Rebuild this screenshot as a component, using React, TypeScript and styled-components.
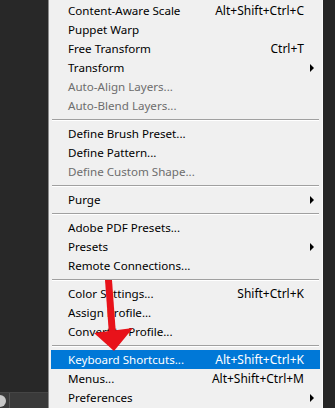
import styled, { createGlobalStyle } from 'styled-components'

const GlobalStyle = createGlobalStyle`
	html, body {
		margin: 0;
		padding: 0;
		background: #282828;
		overflow: hidden;
	}
	body {
		font-family: "Noto Sans", "Open Sans", sans-serif;
	}
`

type Item =
	| { kind: 'item', label: string, shortcut?: string, disabled?: boolean, sub?: boolean, active?: boolean }
	| { kind: 'sep' }

const items: Item[] = [
	{ kind: 'item', label: 'Content-Aware Scale', shortcut: 'Alt+Shift+Ctrl+C' },
	{ kind: 'item', label: 'Puppet Warp' },
	{ kind: 'item', label: 'Free Transform', shortcut: 'Ctrl+T' },
	{ kind: 'item', label: 'Transform', sub: true },
	{ kind: 'item', label: 'Auto-Align Layers...', disabled: true },
	{ kind: 'item', label: 'Auto-Blend Layers...', disabled: true },
	{ kind: 'sep' },
	{ kind: 'item', label: 'Define Brush Preset...' },
	{ kind: 'item', label: 'Define Pattern...' },
	{ kind: 'item', label: 'Define Custom Shape...', disabled: true },
	{ kind: 'sep' },
	{ kind: 'item', label: 'Purge', sub: true },
	{ kind: 'sep' },
	{ kind: 'item', label: 'Adobe PDF Presets...' },
	{ kind: 'item', label: 'Presets', sub: true },
	{ kind: 'item', label: 'Remote Connections...' },
	{ kind: 'sep' },
	{ kind: 'item', label: 'Color Settings...', shortcut: 'Shift+Ctrl+K' },
	{ kind: 'item', label: 'Assign Profile...' },
	{ kind: 'item', label: 'Convert to Profile...' },
	{ kind: 'sep' },
	{ kind: 'item', label: 'Keyboard Shortcuts...', shortcut: 'Alt+Shift+Ctrl+K', active: true },
	{ kind: 'item', label: 'Menus...', shortcut: 'Alt+Shift+Ctrl+M' },
	{ kind: 'item', label: 'Preferences', sub: true },
]

export default function App () {
	return (
		<>
			<GlobalStyle />
			<Page>
				<LeftPanel>
					<StatusBar>
						<ZoomIcon />
						<StatusDivider />
					</StatusBar>
				</LeftPanel>
				<Menu>
					{items.map((it, i) => it.kind === 'sep'
						? <Separator key={i} />
						: (
							<Row key={i} $disabled={it.disabled} $active={it.active}>
								<Label>{it.label}</Label>
								<Shortcut>{it.shortcut}</Shortcut>
								<SubArrow>{it.sub && <ArrowGlyph $active={it.active} />}</SubArrow>
							</Row>
						)
					)}
				</Menu>
				<RightPanel />
				{/* red pointer drawn over the menu */}
				<Pointer viewBox='0 0 60 80' width='60' height='80'>
					<polygon points='17,0 24,0 28,55 21,55' fill='#e8121a' />
					<polygon points='6,53 45,48 26,71' fill='#e8121a' />
				</Pointer>
			</Page>
		</>
	)
}

const Page = styled.div`
	position: relative;
	display: flex;
	width: 335px;
	height: 408px;
	overflow: hidden;
`

const LeftPanel = styled.div`
	width: 48px;
	flex-shrink: 0;
	background: #282828;
	display: flex;
	flex-direction: column;
	justify-content: flex-end;
`

const StatusBar = styled.div`
	height: 15px;
	background: #3a3a3a;
	border-top: 1px solid #454545;
	display: flex;
	align-items: center;
`

const ZoomIcon = styled.div`
	width: 12px;
	height: 12px;
	margin-left: -6px;
	border-radius: 50%;
	background: #c8c8c8;
`

const StatusDivider = styled.div`
	width: 1px;
	height: 15px;
	margin-left: 3px;
	background: #555;
`

const Menu = styled.div`
	width: 275px;
	flex-shrink: 0;
	background: #f0f0f0;
	border-left: 1px solid #8c8c8c;
	border-right: 1px solid #f8f8f8;
	padding: 1px 2px 0;
	box-sizing: border-box;
	height: 408px;
`

const Row = styled.div<{ $disabled?: boolean, $active?: boolean }>`
	height: 19px;
	display: flex;
	align-items: center;
	padding-left: 17px;
	font-size: 11.6px;
	line-height: 19px;
	white-space: nowrap;
	color: ${p => p.$active ? '#fff' : p.$disabled ? '#6d6d6d' : '#000'};
	background: ${p => p.$active ? '#0078d7' : 'transparent'};
`

const Label = styled.span`
	flex: 1;
`

const Shortcut = styled.span`
	text-align: right;
	font-size: 12px;
`

const SubArrow = styled.span`
	width: 16px;
	display: flex;
	align-items: center;
	justify-content: center;
`

const ArrowGlyph = styled.span<{ $active?: boolean }>`
	width: 0;
	height: 0;
	border-top: 4px solid transparent;
	border-bottom: 4px solid transparent;
	border-left: 4px solid ${p => p.$active ? '#fff' : '#000'};
`

const Separator = styled.div`
	height: 9px;
	display: flex;
	flex-direction: column;
	justify-content: center;
	margin: 0 1px;
	&::before {
		content: '';
		height: 1px;
		background: #a0a0a0;
	}
	&::after {
		content: '';
		height: 1px;
		background: #fff;
	}
`

const RightPanel = styled.div`
	flex: 1;
	background: #252525;
`

const Pointer = styled.svg`
	position: absolute;
	left: 88px;
	top: 280px;
`
